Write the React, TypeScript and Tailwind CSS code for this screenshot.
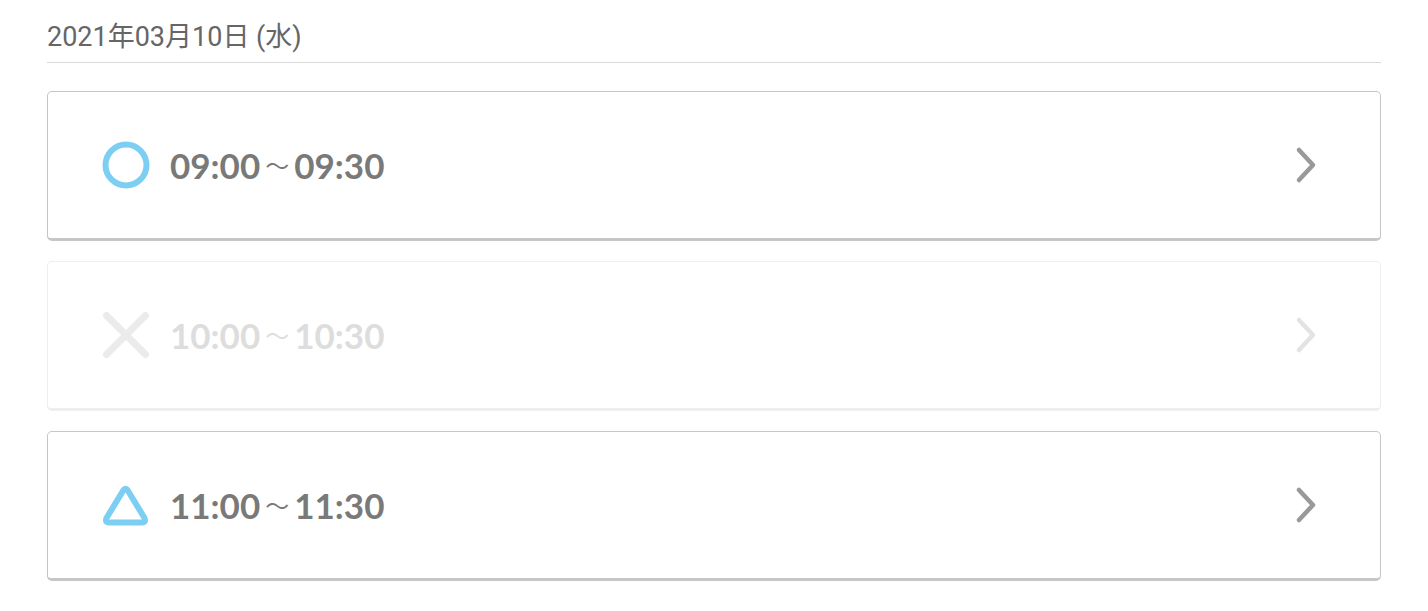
import React from "react";

type Status = "ok" | "ng" | "few";

const slots: { status: Status; from: string; to: string }[] = [
  { status: "ok", from: "09:00", to: "09:30" },
  { status: "ng", from: "10:00", to: "10:30" },
  { status: "few", from: "11:00", to: "11:30" },
];

function StatusIcon({ status }: { status: Status }) {
  if (status === "ok") {
    return (
      <svg width="48" height="48" viewBox="0 0 48 48" className="shrink-0">
        <circle cx="24" cy="24" r="20.5" fill="none" stroke="#7ccff3" strokeWidth="6" />
      </svg>
    );
  }
  if (status === "ng") {
    return (
      <svg width="48" height="48" viewBox="0 0 48 48" className="shrink-0">
        <path d="M4.5 4.5 L43.5 43.5 M43.5 4.5 L4.5 43.5" stroke="#ebebeb" strokeWidth="7" strokeLinecap="round" />
      </svg>
    );
  }
  return (
    <svg width="48" height="48" viewBox="0 0 48 48" className="shrink-0">
      <path
        d="M21.2 9.5 Q23.5 6 25.8 9.5 L42.5 37 Q44.3 41.5 40 41.5 L7 41.5 Q2.7 41.5 4.5 37 Z"
        fill="none"
        stroke="#7ccff3"
        strokeWidth="6"
        strokeLinejoin="round"
      />
    </svg>
  );
}

function Chevron({ color }: { color: string }) {
  return (
    <svg width="26" height="40" viewBox="0 0 26 40" className="shrink-0">
      <path
        d="M5 5 L19 20 L5 35"
        fill="none"
        stroke={color}
        strokeWidth="4.5"
        strokeLinecap="round"
        strokeLinejoin="round"
      />
    </svg>
  );
}

export default function App() {
  return (
    <div className="w-[1428px] h-[611px] bg-white px-[47px] pt-[20px]">
      <div
        className="text-[27px] leading-[34px] text-[#666] pb-[8px] border-b border-[#d9d9d9]"
        style={{ fontFamily: 'Roboto, "Noto Sans CJK JP", sans-serif' }}
      >
        2021年03月10日 (水)
      </div>
      <div className="mt-[28px] flex flex-col gap-[20px]">
        {slots.map((s) => {
          const disabled = s.status === "ng";
          return (
            <div
              key={s.from}
              className={
                disabled
                  ? "h-[150px] rounded-[5px] border border-b-[3px] border-[#eeeeee] flex items-center pl-[54px] pr-[60px]"
                  : "h-[150px] rounded-[5px] border border-b-[3px] border-[#c6c6c6] flex items-center pl-[54px] pr-[60px]"
              }
            >
              <StatusIcon status={s.status} />
              <div
                className={
                  disabled
                    ? "ml-[20px] flex items-center font-bold text-[35px] leading-[40px] text-[#dddddd]"
                    : "ml-[20px] flex items-center font-bold text-[35px] leading-[40px] text-[#797979]"
                }
                style={{ fontFamily: 'Lato, "Noto Sans", sans-serif' }}
              >
                <span>{s.from}</span>
                <span
                  className="mx-[5px] text-[24px] font-normal leading-[24px]"
                  style={{ fontFamily: '"Noto Sans CJK JP", sans-serif' }}
                >
                  〜
                </span>
                <span>{s.to}</span>
              </div>
              <div className="flex-1" />
              <Chevron color={disabled ? "#e3e3e3" : "#999999"} />
            </div>
          );
        })}
      </div>
    </div>
  );
}
